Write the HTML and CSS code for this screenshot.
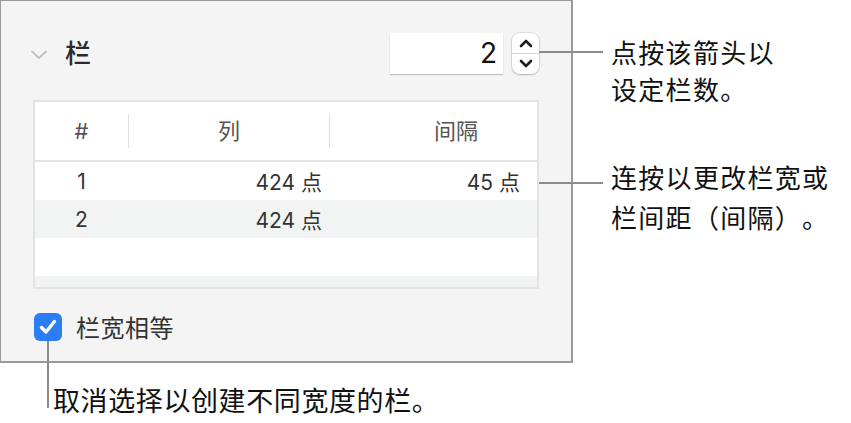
FILE: index.html
```html
<!DOCTYPE html>
<html lang="zh-CN">
<head>
<meta charset="UTF-8">
<meta name="viewport" content="width=device-width, initial-scale=1.0">
<title>栏</title>
<link rel="stylesheet" href="styles.css">
</head>
<body>

<div class="page">
    <section class="panel">
        <div class="panel-head">
            <svg class="disclosure" width="18" height="10" viewBox="0 0 18 10"><path d="M2 1.5 L9 8 L16 1.5" fill="none" stroke="#c2c2c2" stroke-width="2" stroke-linecap="round" stroke-linejoin="round"/></svg>
            <h2 class="panel-title">栏</h2>
            <div class="count">
                <div class="count-field">2</div>
                <div class="stepper">
                    <span class="step step-up"><svg width="14" height="9" viewBox="0 0 14 9"><path d="M2 7 L7 2 L12 7" fill="none" stroke="#1e1e1e" stroke-width="2.6" stroke-linecap="round" stroke-linejoin="round"/></svg></span>
                    <span class="step step-down"><svg width="14" height="9" viewBox="0 0 14 9"><path d="M2 2 L7 7 L12 2" fill="none" stroke="#1e1e1e" stroke-width="2.6" stroke-linecap="round" stroke-linejoin="round"/></svg></span>
                </div>
            </div>
        </div>

        <div class="col-table">
            <div class="t-head">
                <div class="cell cell-num">#</div>
                <div class="cell cell-width">列</div>
                <div class="cell cell-gap">间隔</div>
            </div>
            <div class="t-row t-row-first">
                <div class="cell cell-num">1</div>
                <div class="cell cell-width">424 点</div>
                <div class="cell cell-gap">45 点</div>
            </div>
            <div class="t-row t-row-alt">
                <div class="cell cell-num">2</div>
                <div class="cell cell-width">424 点</div>
                <div class="cell cell-gap"></div>
            </div>
            <div class="t-row"></div>
            <div class="t-row t-row-alt t-row-cut"></div>
        </div>

        <label class="equal">
            <span class="checkbox"><svg width="20" height="18" viewBox="0 0 20 18"><path d="M3.5 9.5 L8 14 L16.5 3.5" fill="none" stroke="#fff" stroke-width="3.4" stroke-linecap="round" stroke-linejoin="round"/></svg></span>
            栏宽相等
        </label>
    </section>

    <div class="notes">
        <p class="note note-arrows">点按该箭头以<br>设定栏数。</p>
        <p class="note note-width">连按以更改栏宽或<br>栏间距（间隔）。</p>
    </div>

    <p class="note note-equal">取消选择以创建不同宽度的栏。</p>
</div>

</body>
</html>
```

FILE: styles.css
```css
body {
    margin: 0;
    background: #fff;
    font-family: Inter, "Noto Sans CJK SC", sans-serif;
    color: #111;
}
.page {
    display: grid;
    grid-template-columns: 573px 1fr;
    align-items: start;
}
.panel {
    box-sizing: border-box;
    width: 573px;
    height: 363px;
    padding: 32px 32px 0 32px;
    background: #f4f4f4;
    border-style: solid;
    border-color: #9a9a9a;
    border-width: 1px 2px 2px 1px;
}
.panel-head {
    display: flex;
    align-items: center;
    height: 41px;
}
.disclosure {
    margin-left: -3px;
    margin-top: 2px;
}
.panel-title {
    margin: 0 0 0 17px;
    font-size: 26px;
    font-weight: 500;
    color: #2b2b2b;
    line-height: 1;
}
.count {
    margin-left: auto;
    display: flex;
    align-items: center;
    gap: 9px;
}
.count-field {
    box-sizing: border-box;
    width: 113px;
    height: 41px;
    padding-right: 6px;
    background: #fff;
    box-shadow: 0 1px 1px rgba(0, 0, 0, 0.22);
    text-align: right;
    font-size: 28px;
    line-height: 41px;
    color: #111;
}
.stepper {
    position: relative;
    display: flex;
    flex-direction: column;
    width: 27px;
    height: 41px;
    background: #fff;
    border-radius: 8px;
    box-shadow: 0 0 0 1px rgba(0, 0, 0, 0.08), 0 1px 2px rgba(0, 0, 0, 0.2);
}
.stepper::after {
    content: "";
    position: absolute;
    left: 100%;
    top: 18px;
    width: 64px;
    height: 2px;
    background: #8c8c8c;
}
.step {
    flex: 1;
    display: flex;
    align-items: center;
    justify-content: center;
}
.step-up {
    border-bottom: 1px solid #d6d6d6;
    padding-top: 1px;
}
.step-down {
    padding-bottom: 1px;
}
.col-table {
    margin-top: 26px;
    height: 189px;
    box-sizing: border-box;
    background: #fff;
    border: 2px solid #e3e3e3;
    font-size: 21px;
    color: #333;
}
.t-head, .t-row {
    display: grid;
    grid-template-columns: 93px 202px 1fr;
    align-items: center;
}
.t-head {
    height: 58px;
    border-bottom: 2px solid #e6e6e6;
    color: #555;
    font-size: 22px;
}
.t-row {
    position: relative;
    height: 38px;
}
.t-row-alt {
    background: #f2f3f3;
}
.t-row-cut {
    height: 11px;
}
.t-row-first::after {
    content: "";
    position: absolute;
    left: calc(100% + 2px);
    top: 20px;
    width: 64px;
    height: 2px;
    background: #8c8c8c;
}
.cell-num {
    text-align: center;
}
.cell-width {
    text-align: right;
    padding-right: 8px;
}
.cell-gap {
    text-align: right;
    padding-right: 17px;
}
.t-head .cell {
    height: 34px;
    line-height: 34px;
}
.t-head .cell-width {
    text-align: center;
    padding-right: 0;
    border-left: 1px solid #e0e0e0;
    border-right: 1px solid #e0e0e0;
}
.t-head .cell-gap {
    padding-right: 59px;
}
.equal {
    display: flex;
    align-items: center;
    gap: 14px;
    margin-top: 20px;
    margin-left: 1px;
    font-size: 24px;
    letter-spacing: 0.5px;
    color: #333;
}
.checkbox {
    position: relative;
    display: flex;
    align-items: center;
    justify-content: center;
    width: 28px;
    height: 28px;
    border-radius: 6px;
    background: #2a7df5;
}
.checkbox::after {
    content: "";
    position: absolute;
    left: 13px;
    top: 100%;
    width: 2px;
    height: 67px;
    background: #8c8c8c;
}
.notes {
    padding-left: 38px;
}
.note {
    margin: 0;
    font-family: "Noto Sans CJK SC", sans-serif;
    font-size: 26px;
    letter-spacing: 1.3px;
    line-height: 37px;
    color: #111;
    text-spacing-trim: space-all;
}
.note-arrows {
    margin-top: 33px;
}
.note-width {
    margin-top: 50px;
    line-height: 40px;
}
.note-equal {
    grid-column: 1 / -1;
    margin-top: 18px;
    padding-left: 53px;
    font-size: 27px;
    letter-spacing: 0.6px;
}
```
